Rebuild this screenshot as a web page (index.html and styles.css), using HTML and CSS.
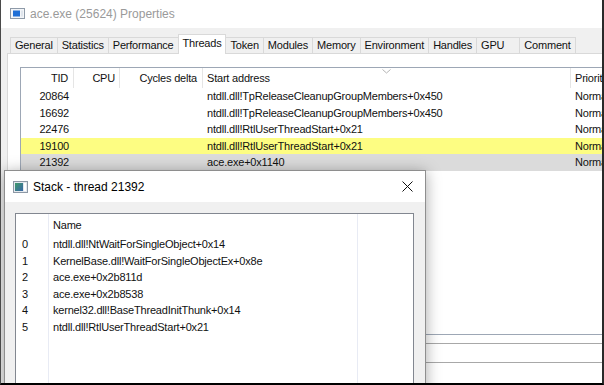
FILE: index.html
```html
<!DOCTYPE html>
<html lang="en">
<head>
    <meta charset="UTF-8">
    <title>ace.exe (25624) Properties</title>
    <link rel="stylesheet" href="styles.css">
</head>
<body>
<div class="screen">
    <div class="window">
        <div class="titlebar">
            <svg class="app-icon" width="15" height="11" viewBox="0 0 15 11">
                <rect x="0.5" y="0.5" width="14" height="10" fill="#f3f5f8" stroke="#8e9aa8"/>
                <rect x="3" y="2.5" width="7" height="6" fill="#1f6fd6"/>
                <rect x="11" y="2.5" width="2" height="6" fill="#dfe5ec"/>
            </svg>
            <span class="title">ace.exe (25624) Properties</span>
        </div>
        <div class="tabs">
            <div class="tab">General</div>
            <div class="tab">Statistics</div>
            <div class="tab">Performance</div>
            <div class="tab active">Threads</div>
            <div class="tab">Token</div>
            <div class="tab">Modules</div>
            <div class="tab">Memory</div>
            <div class="tab">Environment</div>
            <div class="tab">Handles</div>
            <div class="tab gpu">GPU</div>
            <div class="tab">Comment</div>
        </div>
        <div class="panel">
            <div class="threads">
                <div class="row head">
                    <div class="c tid">TID</div>
                    <div class="c cpu">CPU</div>
                    <div class="c cyc">Cycles delta</div>
                    <div class="c addr">Start address
                        <svg class="sort" width="9" height="5" viewBox="0 0 9 5"><path d="M0.5 0.5 L4.5 4 L8.5 0.5" fill="none" stroke="#b5b5b5"/></svg>
                    </div>
                    <div class="c prio">Priority</div>
                </div>
                <div class="row">
                    <div class="c tid">20864</div><div class="c cpu"></div><div class="c cyc"></div>
                    <div class="c addr">ntdll.dll!TpReleaseCleanupGroupMembers+0x450</div><div class="c prio">Normal</div>
                </div>
                <div class="row">
                    <div class="c tid">16692</div><div class="c cpu"></div><div class="c cyc"></div>
                    <div class="c addr">ntdll.dll!TpReleaseCleanupGroupMembers+0x450</div><div class="c prio">Normal</div>
                </div>
                <div class="row">
                    <div class="c tid">22476</div><div class="c cpu"></div><div class="c cyc"></div>
                    <div class="c addr">ntdll.dll!RtlUserThreadStart+0x21</div><div class="c prio">Normal</div>
                </div>
                <div class="row new">
                    <div class="c tid">19100</div><div class="c cpu"></div><div class="c cyc"></div>
                    <div class="c addr">ntdll.dll!RtlUserThreadStart+0x21</div><div class="c prio">Normal</div>
                </div>
                <div class="row selected">
                    <div class="c tid">21392</div><div class="c cpu"></div><div class="c cyc"></div>
                    <div class="c addr">ace.exe+0x1140</div><div class="c prio">Normal</div>
                </div>
            </div>
            <div class="bottom-bar"></div>
        </div>
    </div>

    <div class="stack">
        <div class="stack-title">
            <svg class="stack-icon" width="15" height="12" viewBox="0 0 15 12">
                <defs>
                    <linearGradient id="g" x1="0" y1="0" x2="1" y2="1">
                        <stop offset="0" stop-color="#3f9a6a"/>
                        <stop offset="1" stop-color="#3866a8"/>
                    </linearGradient>
                </defs>
                <rect x="0.5" y="0.5" width="14" height="11" fill="#e3e8ee" stroke="#8d98a5"/>
                <rect x="2" y="2" width="8" height="8" fill="url(#g)"/>
                <rect x="11" y="2" width="2" height="8" fill="#ffffff"/>
            </svg>
            <span>Stack - thread 21392</span>
            <svg class="close" width="11" height="11" viewBox="0 0 11 11">
                <path d="M0.5 0.5 L10.5 10.5 M10.5 0.5 L0.5 10.5" stroke="#111" stroke-width="1"/>
            </svg>
        </div>
        <div class="stack-body">
            <div class="stack-list">
                <div class="srow shead"><div class="idx"></div><div class="name">Name</div></div>
                <div class="srow"><div class="idx">0</div><div class="name">ntdll.dll!NtWaitForSingleObject+0x14</div></div>
                <div class="srow"><div class="idx">1</div><div class="name">KernelBase.dll!WaitForSingleObjectEx+0x8e</div></div>
                <div class="srow"><div class="idx">2</div><div class="name">ace.exe+0x2b811d</div></div>
                <div class="srow"><div class="idx">3</div><div class="name">ace.exe+0x2b8538</div></div>
                <div class="srow"><div class="idx">4</div><div class="name">kernel32.dll!BaseThreadInitThunk+0x14</div></div>
                <div class="srow"><div class="idx">5</div><div class="name">ntdll.dll!RtlUserThreadStart+0x21</div></div>
            </div>
        </div>
    </div>
</div>
</body>
</html>
```

FILE: styles.css
```css
* {
    box-sizing: border-box;
}
body {
    margin: 0;
    font-family: "Liberation Sans", Arial, sans-serif;
    font-size: 11px;
    letter-spacing: -0.2px;
    color: #111;
}
.screen {
    position: relative;
    width: 604px;
    height: 385px;
    overflow: hidden;
    background: #f0f0f0;
    border-left: 1px solid #4a4a4a;
    border-right: 2px solid #2a2a2a;
    border-bottom: 2px solid #000;
}
.window {
    display: flex;
    flex-direction: column;
    height: 100%;
}
.titlebar {
    height: 28px;
    background: #fff;
    display: flex;
    align-items: center;
    gap: 5px;
    padding-left: 9px;
    padding-bottom: 1px;
}
.title {
    font-size: 12px;
    letter-spacing: 0;
    color: #9a9a9a;
}

/* tabs */
.tabs {
    height: 25px;
    display: flex;
    align-items: flex-end;
    padding-left: 9px;
}
.tab {
    height: 16px;
    line-height: 15px;
    padding: 0 4px;
    border: 1px solid #d9d9d9;
    border-bottom: none;
    margin-right: -1px;
    white-space: nowrap;
}
.tab.active {
    position: relative;
    z-index: 1;
    height: 20px;
    margin-bottom: -1px;
    background: #fff;
    line-height: 16px;
}
.tab.gpu {
    padding-right: 15px;
}

/* main panel */
.panel {
    flex: 1;
    margin-left: 6px;
    padding: 13px 0 0 12px;
    background: #fff;
    border-top: 1px solid #d9d9d9;
    border-left: 1px solid #d9d9d9;
}
.threads {
    width: 660px;
    height: 268px;
    border: 1px solid #9da7b5;
    border-right: none;
}
.row {
    display: flex;
    height: 16.5px;
    line-height: 16.5px;
    white-space: nowrap;
}
.row.head {
    height: 20px;
    line-height: 20px;
}
.c {
    flex: none;
    overflow: hidden;
}
.head .c {
    border-right: 1px solid #e5e5e5;
    position: relative;
}
.tid { width: 53px; text-align: right; padding-right: 5px; }
.cpu { width: 46px; text-align: right; padding-right: 4px; }
.cyc { width: 83px; text-align: right; padding-right: 5px; }
.addr { width: 368px; padding-left: 4px; }
.prio { width: 90px; padding-left: 4px; }
.head .c.prio { border-right: none; }
.sort {
    position: absolute;
    top: 1px;
    left: 179px;
}
.row.new {
    background: #fdfd82;
}
.row.selected {
    background: #dbdbdb;
}
.bottom-bar {
    width: 660px;
    height: 20px;
    margin-top: 8px;
    border-top: 1px solid #a8a8a8;
    border-bottom: 1px solid #a8a8a8;
}

/* stack window */
.stack {
    position: absolute;
    left: 3px;
    top: 170px;
    width: 422px;
    height: 240px;
    display: flex;
    flex-direction: column;
    background: #f0f0f0;
    border: 1px solid #8e8e8e;
    box-shadow: 0 2px 14px rgba(0, 0, 0, 0.35);
}
.stack-title {
    height: 31px;
    flex: none;
    display: flex;
    align-items: center;
    gap: 5px;
    padding: 0 12px 0 8px;
    background: #fff;
    font-size: 12px;
    letter-spacing: 0;
    color: #000;
}
.close {
    margin-left: auto;
}
.stack-body {
    flex: 1;
    padding: 11px 11px 0 10px;
}
.stack-list {
    height: 100%;
    border: 1px solid #828790;
    background:
        linear-gradient(#e8ebf4, #e8ebf4) 32px 0 / 1px 100% no-repeat,
        linear-gradient(#e8ebf4, #e8ebf4) 341px 0 / 1px 100% no-repeat,
        #fff;
}
.srow {
    display: flex;
    height: 16.6px;
    line-height: 16.6px;
    white-space: nowrap;
}
.srow.shead {
    height: 22px;
    line-height: 22px;
}
.idx {
    width: 33px;
    flex: none;
    padding-left: 6px;
}
.name {
    padding-left: 4px;
}
```
